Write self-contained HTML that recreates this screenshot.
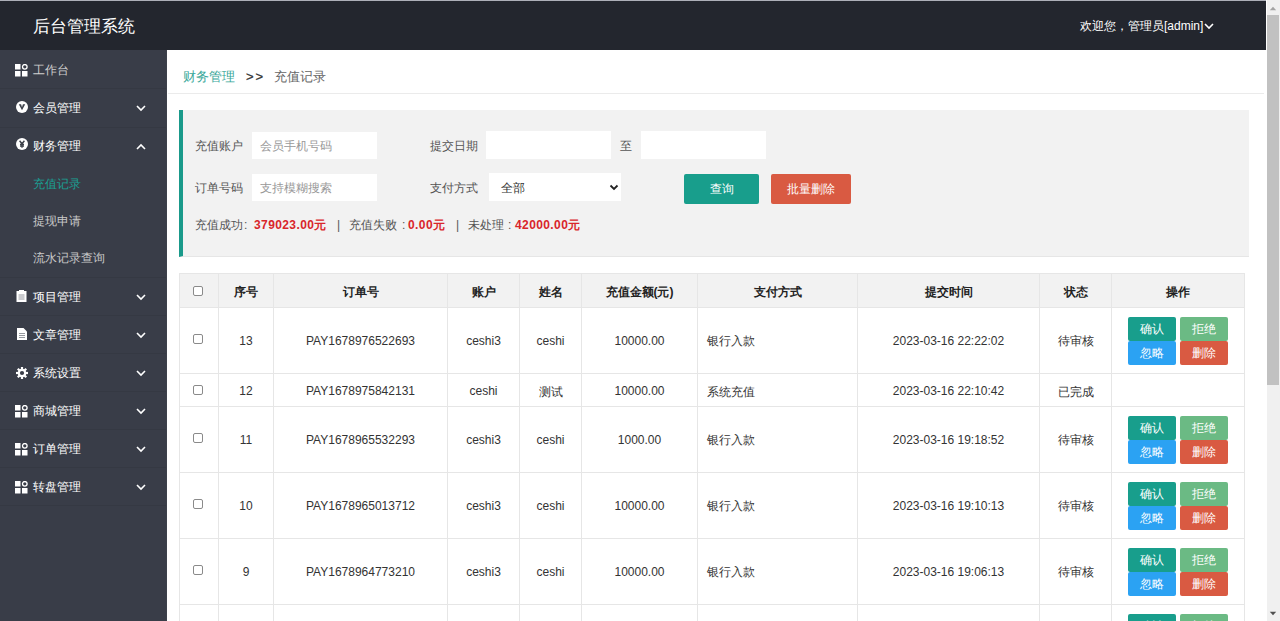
<!DOCTYPE html>
<html><head><meta charset="utf-8">
<style>
*{box-sizing:border-box;margin:0;padding:0}
html,body{width:1280px;height:621px;overflow:hidden;background:#fff;font-family:"Liberation Sans",sans-serif;font-size:12px;color:#333}
.abs{position:absolute}
#topline{left:0;top:0;width:1266px;height:1px;background:#adafb8}
#header{left:0;top:1px;width:1266px;height:49px;background:#23262e}
#title{left:33px;top:16px;font-size:17px;line-height:22px;color:#fff;white-space:nowrap}
#welcome{left:1080px;top:18px;font-size:12px;line-height:16px;color:#fff;white-space:nowrap}
#side{left:0;top:50px;width:167px;height:571px;background:#393d48;border-right:1px solid #3d414b}
.sep{left:0;width:166px;height:1px;background:#353943}
.item{left:0;width:166px;height:20px;line-height:20px;color:#fff;white-space:nowrap}
.item .t{position:absolute;left:33px;top:0}
.item .ic{position:absolute;left:15px;top:4px}
.item .ch{position:absolute;left:136px;top:6px}
.sub .t{color:#c9c9c9}
#main{left:167px;top:50px;width:1100px;height:571px;background:#fff}
#bc{left:183px;top:68px;font-size:13px;line-height:17px;white-space:nowrap}
#bcline{left:168px;top:93px;width:1096px;height:1px;background:#ebebeb}
#filter{left:179px;top:110px;width:1070px;height:147px;background:#f2f2f2;border-left:4px solid #1a9a8b;border-bottom:1px solid #e6e6e6}
.lbl{color:#555;white-space:nowrap;line-height:16px}
.inp{background:#fff}
.ph{color:#999;white-space:nowrap;line-height:16px}
.st{top:217px;font-size:12px;line-height:16px}
.st2{top:217px;font-size:12px;line-height:16px;color:#555}
.num{top:217px;font-size:12px;line-height:16px;font-weight:bold;color:#d9262b;letter-spacing:0.4px;white-space:nowrap}
.btn{color:#fff;text-align:center;border-radius:2px;white-space:nowrap}
#scroll{left:1267px;top:0;width:13px;height:621px;background:#f0f0f0}
#thumb{left:1267px;top:15px;width:12px;height:370px;background:#c1c1c1}
table{position:absolute;left:179px;top:273px;border-collapse:collapse;table-layout:fixed}
td,th{border:1px solid #e6e6e6;text-align:center;font-size:12px;color:#333;padding:0;white-space:nowrap}
th{background:#f2f2f2;font-weight:bold;height:34px;color:#222;padding-top:3px}
tr.r12 td{padding-top:2px}
.cj{position:relative;top:1px}
td.l{text-align:left;padding-left:9px}
.cb{display:inline-block;width:10px;height:10px;border:1px solid #8a8a8a;border-radius:2px;background:#fff;vertical-align:middle;position:relative;top:-2px;left:-1px}
.ops{display:inline-grid;grid-template-columns:48px 48px;column-gap:4px;width:100px;vertical-align:middle}
.ops span{display:inline-block;width:48px;height:24px;line-height:24px;font-size:12px;color:#fff;border-radius:2px;text-align:center}

.b1{background:#189e8c}.b2{background:#6bba84}.b3{background:#2ba2f3}.b4{background:#d95a42}
</style></head><body>
<div id="topline" class="abs"></div>
<div id="header" class="abs"></div>
<div id="title" class="abs">后台管理系统</div>
<div id="welcome" class="abs">欢迎您，管理员[admin]<svg width="10" height="8" viewBox="0 0 10 8" style="margin-left:1px;vertical-align:0px"><path d="M1 2 L5 6 L9 2" stroke="#fff" stroke-width="1.6" fill="none"/></svg></div>

<div id="side" class="abs"></div>
<div class="sep abs" style="top:88px"></div>
<div class="sep abs" style="top:127px"></div>
<div class="sep abs" style="top:277px"></div>
<div class="sep abs" style="top:315px"></div>
<div class="sep abs" style="top:353px"></div>
<div class="sep abs" style="top:391px"></div>
<div class="sep abs" style="top:429px"></div>
<div class="sep abs" style="top:467px"></div>
<div class="sep abs" style="top:505px"></div>

<!-- sidebar items -->
<div class="item abs" style="top:60px"><svg class="ic" width="13" height="13" viewBox="0 0 13 13"><rect x="0" y="0" width="5.5" height="5.5" fill="#fff"/><circle cx="9.8" cy="2.8" r="2.3" stroke="#fff" stroke-width="1.3" fill="none"/><rect x="0" y="7" width="5.5" height="5.5" fill="#fff"/><rect x="7" y="7" width="5.5" height="5.5" fill="#fff"/></svg><span class="t" style="color:#cfcfcf">工作台</span></div>
<div class="item abs" style="top:98px"><svg class="ic" style="left:16px;top:3px" width="12" height="12" viewBox="0 0 12 12"><circle cx="6" cy="6" r="6" fill="#fff"/><path d="M2.8 3.3 H5.1 L6 6.3 L6.9 3.3 H9.2 L6 9.3 Z" fill="#3d414a"/></svg><span class="t">会员管理</span><svg class="ch" width="10" height="8" viewBox="0 0 10 8"><path d="M1 2 L5 6 L9 2" stroke="#fff" stroke-width="1.6" fill="none"/></svg></div>
<div class="item abs" style="top:136px"><svg class="ic" style="left:16px;top:2px" width="12" height="12" viewBox="0 0 12 12"><circle cx="6" cy="6" r="6" fill="#fff"/><path d="M3.6 2.8 L6 5.8 L8.4 2.8 M6 5.8 V9.8 M4 6.4 H8 M4 8 H8" stroke="#3d414a" stroke-width="1.4" fill="none"/></svg><span class="t">财务管理</span><svg class="ch" style="top:7px" width="10" height="8" viewBox="0 0 10 8"><path d="M1 6 L5 2 L9 6" stroke="#fff" stroke-width="1.6" fill="none"/></svg></div>
<div class="item sub abs" style="top:174px"><span class="t" style="color:#1aa094">充值记录</span></div>
<div class="item sub abs" style="top:211px"><span class="t">提现申请</span></div>
<div class="item sub abs" style="top:248px"><span class="t">流水记录查询</span></div>
<div class="item abs" style="top:287px"><svg class="ic" style="left:16px;top:3px" width="11" height="12" viewBox="0 0 11 12"><rect x="0.5" y="1" width="10" height="11" fill="#fff"/><rect x="3" y="0" width="5" height="2" fill="#fff"/><path d="M2.5 5 H8.5 M2.5 7 H8.5 M2.5 9 H8.5" stroke="#8a8d94" stroke-width="0.9"/></svg><span class="t">项目管理</span><svg class="ch" width="10" height="8" viewBox="0 0 10 8"><path d="M1 2 L5 6 L9 2" stroke="#fff" stroke-width="1.6" fill="none"/></svg></div>
<div class="item abs" style="top:325px"><svg class="ic" style="left:17px;top:3px" width="10" height="12" viewBox="0 0 10 12"><path d="M0 0 H6.5 L10 3.5 V12 H0 Z" fill="#fff"/><path d="M2 5.5 H8 M2 7.5 H8 M2 9.5 H8" stroke="#8a8d94" stroke-width="0.9"/></svg><span class="t">文章管理</span><svg class="ch" width="10" height="8" viewBox="0 0 10 8"><path d="M1 2 L5 6 L9 2" stroke="#fff" stroke-width="1.6" fill="none"/></svg></div>
<div class="item abs" style="top:363px"><svg class="ic" style="left:16px;top:4px" width="12" height="12" viewBox="0 0 12 12"><g fill="#fff"><circle cx="6" cy="6" r="4.3"/><rect x="4.9" y="0" width="2.2" height="12"/><rect x="0" y="4.9" width="12" height="2.2"/><rect x="4.9" y="0" width="2.2" height="12" transform="rotate(45 6 6)"/><rect x="4.9" y="0" width="2.2" height="12" transform="rotate(-45 6 6)"/></g><circle cx="6" cy="6" r="2.1" fill="#393d48"/></svg><span class="t">系统设置</span><svg class="ch" width="10" height="8" viewBox="0 0 10 8"><path d="M1 2 L5 6 L9 2" stroke="#fff" stroke-width="1.6" fill="none"/></svg></div>
<div class="item abs" style="top:401px"><svg class="ic" width="13" height="13" viewBox="0 0 13 13"><rect x="0" y="0" width="5.5" height="5.5" fill="#fff"/><circle cx="9.8" cy="2.8" r="2.3" stroke="#fff" stroke-width="1.3" fill="none"/><rect x="0" y="7" width="5.5" height="5.5" fill="#fff"/><rect x="7" y="7" width="5.5" height="5.5" fill="#fff"/></svg><span class="t">商城管理</span><svg class="ch" width="10" height="8" viewBox="0 0 10 8"><path d="M1 2 L5 6 L9 2" stroke="#fff" stroke-width="1.6" fill="none"/></svg></div>
<div class="item abs" style="top:439px"><svg class="ic" width="13" height="13" viewBox="0 0 13 13"><rect x="0" y="0" width="5.5" height="5.5" fill="#fff"/><circle cx="9.8" cy="2.8" r="2.3" stroke="#fff" stroke-width="1.3" fill="none"/><rect x="0" y="7" width="5.5" height="5.5" fill="#fff"/><rect x="7" y="7" width="5.5" height="5.5" fill="#fff"/></svg><span class="t">订单管理</span><svg class="ch" width="10" height="8" viewBox="0 0 10 8"><path d="M1 2 L5 6 L9 2" stroke="#fff" stroke-width="1.6" fill="none"/></svg></div>
<div class="item abs" style="top:477px"><svg class="ic" width="13" height="13" viewBox="0 0 13 13"><rect x="0" y="0" width="5.5" height="5.5" fill="#fff"/><circle cx="9.8" cy="2.8" r="2.3" stroke="#fff" stroke-width="1.3" fill="none"/><rect x="0" y="7" width="5.5" height="5.5" fill="#fff"/><rect x="7" y="7" width="5.5" height="5.5" fill="#fff"/></svg><span class="t">转盘管理</span><svg class="ch" width="10" height="8" viewBox="0 0 10 8"><path d="M1 2 L5 6 L9 2" stroke="#fff" stroke-width="1.6" fill="none"/></svg></div>

<!-- breadcrumb -->
<div class="abs" style="left:183px;top:68px;font-size:13.3px;line-height:17px;color:#3aa89a;white-space:nowrap">财务管理</div>
<div class="abs" style="left:246px;top:68px;font-size:13px;line-height:17px;color:#333;white-space:nowrap;letter-spacing:2px;-webkit-text-stroke:0.3px #333">&gt;&gt;</div>
<div class="abs" style="left:274px;top:68px;font-size:13.3px;line-height:17px;color:#666;white-space:nowrap">充值记录</div>
<div id="bcline" class="abs"></div>

<!-- filter -->
<div id="filter" class="abs"></div>
<div class="lbl abs" style="left:195px;top:138px">充值账户</div>
<div class="inp abs" style="left:252px;top:132px;width:125px;height:27px"></div>
<div class="ph abs" style="left:260px;top:138px">会员手机号码</div>
<div class="lbl abs" style="left:430px;top:138px">提交日期</div>
<div class="inp abs" style="left:486px;top:131px;width:125px;height:28px"></div>
<div class="lbl abs" style="left:620px;top:138px">至</div>
<div class="inp abs" style="left:641px;top:131px;width:125px;height:28px"></div>

<div class="lbl abs" style="left:195px;top:180px">订单号码</div>
<div class="inp abs" style="left:252px;top:174px;width:125px;height:27px"></div>
<div class="ph abs" style="left:260px;top:180px">支持模糊搜索</div>
<div class="lbl abs" style="left:430px;top:180px">支付方式</div>
<div class="inp abs" style="left:489px;top:173px;width:132px;height:28px"></div>
<div class="lbl abs" style="left:501px;top:180px;color:#333">全部</div>
<svg class="abs" style="left:609px;top:184px" width="10" height="7" viewBox="0 0 10 7"><path d="M1.5 1.5 L5 5 L8.5 1.5" stroke="#222" stroke-width="1.8" fill="none"/></svg>
<div class="btn abs b1" style="left:684px;top:174px;width:75px;height:30px;line-height:30px">查询</div>
<div class="btn abs b4" style="left:771px;top:174px;width:80px;height:30px;line-height:30px">批量删除</div>

<div class="lbl abs st" style="left:195px">充值成功</div><div class="lbl abs st2" style="left:244px">:</div><div class="abs num" style="left:254px">379023.00元</div>
<div class="lbl abs st2" style="left:337px">|</div>
<div class="lbl abs st" style="left:349px">充值失败</div><div class="lbl abs st2" style="left:402px">:</div><div class="abs num" style="left:408px">0.00元</div>
<div class="lbl abs st2" style="left:456px">|</div>
<div class="lbl abs st" style="left:468px">未处理</div><div class="lbl abs st2" style="left:508px">:</div><div class="abs num" style="left:515px">42000.00元</div>

<!-- table -->
<table>
<colgroup><col style="width:39px"><col style="width:55px"><col style="width:174px"><col style="width:72px"><col style="width:62px"><col style="width:116px"><col style="width:160px"><col style="width:182px"><col style="width:72px"><col style="width:133px"></colgroup>
<tr><th><span class="cb"></span></th><th>序号</th><th>订单号</th><th>账户</th><th>姓名</th><th>充值金额(元)</th><th>支付方式</th><th>提交时间</th><th>状态</th><th>操作</th></tr>
<tr style="height:66px"><td><span class="cb"></span></td><td>13</td><td>PAY1678976522693</td><td>ceshi3</td><td>ceshi</td><td>10000.00</td><td class="l"><span class="cj">银行入款</span></td><td>2023-03-16 22:22:02</td><td><span class="cj">待审核</span></td><td><div class="ops"><span class="b1">确认</span><span class="b2">拒绝</span><span class="b3">忽略</span><span class="b4">删除</span></div></td></tr>
<tr style="height:33px" class="r12"><td><span class="cb"></span></td><td>12</td><td>PAY1678975842131</td><td>ceshi</td><td><span class="cj">测试</span></td><td>10000.00</td><td class="l"><span class="cj">系统充值</span></td><td>2023-03-16 22:10:42</td><td><span class="cj">已完成</span></td><td></td></tr>
<tr style="height:66px"><td><span class="cb"></span></td><td>11</td><td>PAY1678965532293</td><td>ceshi3</td><td>ceshi</td><td>1000.00</td><td class="l"><span class="cj">银行入款</span></td><td>2023-03-16 19:18:52</td><td><span class="cj">待审核</span></td><td><div class="ops"><span class="b1">确认</span><span class="b2">拒绝</span><span class="b3">忽略</span><span class="b4">删除</span></div></td></tr>
<tr style="height:66px"><td><span class="cb"></span></td><td>10</td><td>PAY1678965013712</td><td>ceshi3</td><td>ceshi</td><td>10000.00</td><td class="l"><span class="cj">银行入款</span></td><td>2023-03-16 19:10:13</td><td><span class="cj">待审核</span></td><td><div class="ops"><span class="b1">确认</span><span class="b2">拒绝</span><span class="b3">忽略</span><span class="b4">删除</span></div></td></tr>
<tr style="height:66px"><td><span class="cb"></span></td><td>9</td><td>PAY1678964773210</td><td>ceshi3</td><td>ceshi</td><td>10000.00</td><td class="l"><span class="cj">银行入款</span></td><td>2023-03-16 19:06:13</td><td><span class="cj">待审核</span></td><td><div class="ops"><span class="b1">确认</span><span class="b2">拒绝</span><span class="b3">忽略</span><span class="b4">删除</span></div></td></tr>
<tr style="height:66px"><td><span class="cb"></span></td><td>8</td><td>PAY1678964512345</td><td>ceshi3</td><td>ceshi</td><td>10000.00</td><td class="l"><span class="cj">银行入款</span></td><td>2023-03-16 19:00:00</td><td><span class="cj">待审核</span></td><td><div class="ops"><span class="b1">确认</span><span class="b2">拒绝</span><span class="b3">忽略</span><span class="b4">删除</span></div></td></tr>
</table>

<div id="scroll" class="abs"></div>
<div id="thumb" class="abs"></div>
<svg class="abs" style="left:1269px;top:6px" width="8" height="5" viewBox="0 0 8 5"><path d="M0.8 4.2 L4 0.8 L7.2 4.2 Z" fill="#a3a3a3"/></svg>
<svg class="abs" style="left:1269px;top:611px" width="8" height="5" viewBox="0 0 8 5"><path d="M0.8 0.8 L4 4.2 L7.2 0.8 Z" fill="#505050"/></svg>
</body></html>
